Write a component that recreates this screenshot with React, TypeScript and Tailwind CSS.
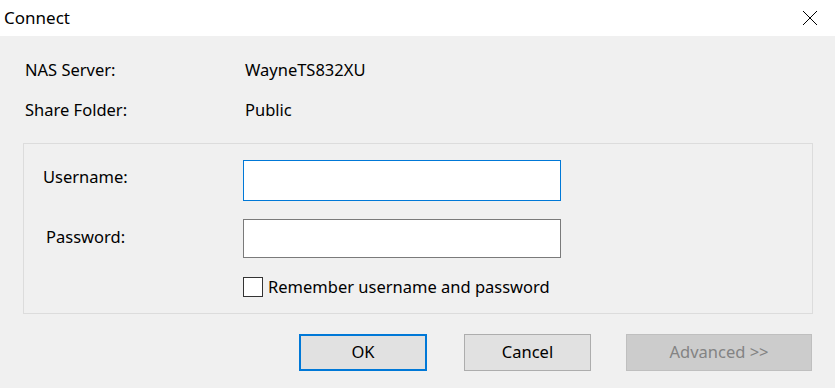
import React from "react";

const font = { fontFamily: '"Noto Sans", "Open Sans", sans-serif' };

const App: React.FC = () => {
    return (
        <div
            className="w-[835px] h-[388px] flex flex-col bg-[#f0f0f0] text-black text-[16.5px] overflow-hidden"
            style={font}
        >
            {/* title bar */}
            <div className="h-9 bg-white flex items-center justify-between pl-1 pr-4">
                <span className="text-[17px] leading-none mb-[2px]">Connect</span>
                <svg width="16" height="16" viewBox="0 0 16 16" className="mr-[1px]">
                    <path d="M1 1 L15 15 M15 1 L1 15" stroke="#000" strokeWidth="1" />
                </svg>
            </div>

            <div className="flex flex-col px-[23px] pt-[22px]">
                <div className="flex flex-col gap-4 pl-[2px]">
                    <div className="flex h-6 items-center">
                        <span className="w-[220px]">NAS Server:</span>
                        <span>WayneTS832XU</span>
                    </div>
                    <div className="flex h-6 items-center">
                        <span className="w-[220px]">Share Folder:</span>
                        <span>Public</span>
                    </div>
                </div>

                <div className="mt-[21px] w-[790px] border border-[#dcdcdc] pt-4 pb-4 flex flex-col">
                    <div className="flex items-center h-10">
                        <span className="w-[219px] pl-[19px] mb-[5px]">Username:</span>
                        <div className="w-[318px] h-[41px] bg-white border border-[#0078d7]"></div>
                    </div>
                    <div className="flex items-center h-10 mt-[18px]">
                        <span className="w-[219px] pl-[22px] mb-[2px]">Password:</span>
                        <div className="w-[318px] h-[39px] bg-white border border-[#7a7a7a]"></div>
                    </div>
                    <div className="flex items-center mt-[19px] pl-[219px] h-5">
                        <div className="w-5 h-5 bg-white border border-[#333333]"></div>
                        <span className="ml-[5px]">Remember username and password</span>
                    </div>
                </div>

                <div className="flex mt-5 pl-[276px]">
                    <button className="w-[128px] h-[37px] bg-[#e1e1e1] border-2 border-[#0078d7]">OK</button>
                    <button className="ml-[37px] w-[127px] h-[37px] bg-[#e1e1e1] border border-[#adadad]">
                        Cancel
                    </button>
                    <button
                        disabled
                        className="ml-[35px] w-[186px] h-[37px] bg-[#cccccc] border border-[#bfbfbf] text-[#838383]"
                    >
                        Advanced &gt;&gt;
                    </button>
                </div>
            </div>
        </div>
    );
};

export default App;
